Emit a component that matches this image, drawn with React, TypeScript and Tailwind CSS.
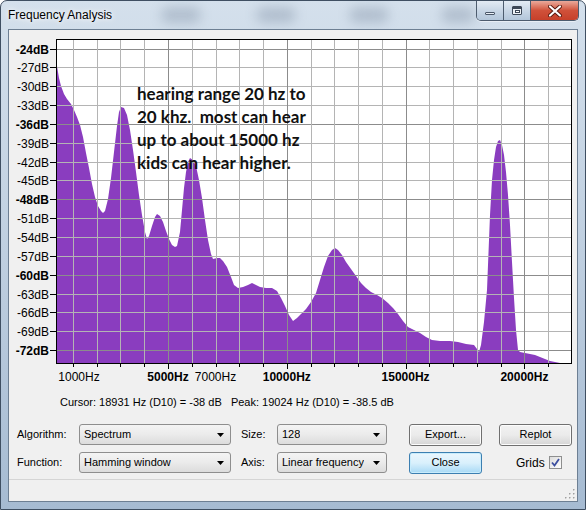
import React from "react";

const Y0 = 48.5;
const DY = 18.85;
const dbLabels = Array.from({ length: 17 }, (_, k) => -24 - k * 3);
const vLines = Array.from({ length: 21 }, (_, i) => i + 1);
const vx = (n: number) => Math.round(49.2 + 23.76 * n) + 0.5;
const hy = (k: number) => Math.round(Y0 + k * DY) + 0.5;

const xLabels = [
  { t: "1000Hz", x: 79, b: false },
  { t: "5000Hz", x: 168, b: true },
  { t: "7000Hz", x: 215.5, b: false },
  { t: "10000Hz", x: 286.8, b: true },
  { t: "15000Hz", x: 405.6, b: true },
  { t: "20000Hz", x: 524.4, b: true },
];

// spectrum outline, page coordinates
const curve = [
  [57, 66], [59, 78], [61, 86], [64, 94], [67, 99], [71, 104], [74, 110], [77, 117], [80, 125], [83, 137],
  [86, 153], [89, 168], [92, 184], [95, 197], [98, 206], [101, 211], [103, 213], [105, 211], [108, 199],
  [111, 178], [114, 152], [117, 126], [119, 112], [121, 107], [124, 108], [127, 115], [130, 130], [133, 150],
  [136, 172], [139, 195], [142, 215], [145, 232], [147, 239], [149, 236], [152, 226], [155, 217], [157, 214],
  [160, 216], [163, 222], [166, 231], [169, 239], [172, 245], [175, 247], [177, 246], [180, 232], [182, 210],
  [184, 188], [186, 172], [188, 162], [190, 158], [193, 160], [196, 166], [199, 180], [202, 198], [205, 220],
  [208, 240], [211, 254], [213, 259], [217, 258], [220, 258], [223, 261], [227, 267], [231, 277], [234, 285],
  [238, 288], [243, 287], [248, 285], [252, 283], [256, 285], [260, 287], [266, 288], [272, 288], [277, 291],
  [281, 298], [285, 306], [289, 315], [293, 321], [297, 318], [301, 314], [306, 309], [311, 302], [316, 293],
  [320, 280], [324, 267], [328, 256], [332, 250], [335, 248], [338, 250], [342, 255], [346, 262], [351, 269],
  [356, 276], [361, 283], [366, 288], [371, 292], [377, 295], [382, 298], [388, 303], [393, 308], [398, 314],
  [403, 321], [408, 327], [414, 330], [420, 333], [426, 337], [432, 340], [440, 341], [450, 341], [458, 342],
  [466, 344], [474, 345], [477, 349], [479, 352], [481, 345], [484, 322], [487, 290], [490, 215], [492, 180],
  [494, 160], [496, 147], [498, 141], [500, 140], [502, 145], [504, 155], [506, 172], [508, 195], [510, 225],
  [512, 262], [514, 298], [516, 330], [518, 350], [520, 352], [525, 353], [530, 354], [535, 355], [540, 357],
  [545, 359], [550, 361], [555, 362], [560, 363], [565, 364],
];
const fillPoints = "57,364 " + curve.map(p => p.join(",")).join(" ");

const note = [
  "hearing range 20 hz to",
  "20 khz.  most can hear",
  "up to about 15000 hz",
  "kids can hear higher.",
];

function Chart() {
  return (
    <svg width={568} height={360} viewBox="9 30 568 360" className="block shrink-0">
      <rect x={56.5} y={39.5} width={515} height={324} fill="#ffffff" />
      <polygon points={fillPoints} fill="#8a3dbf" />
      {dbLabels.map((_, k) => (
        <line key={"h" + k} x1={57} x2={571} y1={hy(k)} y2={hy(k)} stroke={k % 4 === 0 ? "#8c8c8c" : "#b4b4b4"} shapeRendering="crispEdges" />
      ))}
      {vLines.map(n => (
        <line key={"v" + n} x1={vx(n)} x2={vx(n)} y1={40} y2={363} stroke={n % 5 === 0 ? "#8c8c8c" : "#b4b4b4"} shapeRendering="crispEdges" />
      ))}
      <rect x={56.5} y={39.5} width={515} height={324} fill="none" stroke="#000000" shapeRendering="crispEdges" />
      {dbLabels.map((db, k) => (
        <g key={"l" + k}>
          <line x1={50} x2={56} y1={hy(k)} y2={hy(k)} stroke="#000000" shapeRendering="crispEdges" />
          <text x={49} y={hy(k) + 4.5} textAnchor="end" fontSize={12} fontWeight={k % 4 === 0 ? 700 : 400} fontFamily="'Liberation Sans', Arial, sans-serif" fill="#000000">
            {db}dB
          </text>
        </g>
      ))}
      {vLines.map(n => (
        <line key={"t" + n} x1={vx(n)} x2={vx(n)} y1={364} y2={n % 5 === 0 ? 369 : 367} stroke="#000000" shapeRendering="crispEdges" />
      ))}
      {xLabels.map(l => (
        <text key={l.t} x={l.x} y={381} textAnchor="middle" fontSize={12} fontWeight={l.b ? 700 : 400} fontFamily="'Liberation Sans', Arial, sans-serif" fill="#000000">
          {l.t}
        </text>
      ))}
      {note.map((line, i) => (
        <text key={i} x={137} y={100 + i * 23} fontSize={17} fontWeight={700} fontFamily="Lato, 'Open Sans', sans-serif" fill="#111111" xmlSpace="preserve">
          {line}
        </text>
      ))}
    </svg>
  );
}

function Combo({ value, width }: { value: string; width: string }) {
  return (
    <div className={"flex h-[21px] items-center justify-between rounded-[3px] border border-[#8e8e8e] bg-gradient-to-b from-[#f4f4f4] via-[#ebebeb] to-[#dcdcdc] pl-[4px] pr-[6px] " + width}>
      <span className="truncate">{value}</span>
      <svg width="7" height="4" viewBox="0 0 7 4" className="shrink-0">
        <path d="M0 0 H7 L3.5 4 Z" fill="#000000" />
      </svg>
    </div>
  );
}

function Button({ label, focused }: { label: string; focused?: boolean }) {
  return (
    <div
      className={
        focused
          ? "flex h-[22px] w-[73px] items-center justify-center rounded-[3px] border border-[#3c7fb1] bg-gradient-to-b from-[#eaf6fd] via-[#d9f0fc] to-[#a7d9f5] shadow-[inset_0_0_0_1px_#c8ecfc]"
          : "flex h-[22px] w-[73px] items-center justify-center rounded-[3px] border border-[#707070] bg-gradient-to-b from-[#f2f2f2] via-[#ebebeb] to-[#d5d5d5] shadow-[inset_0_0_0_1px_#fcfcfc]"
      }
    >
      {label}
    </div>
  );
}

function TitleButtons() {
  return (
    <div className="flex h-[20px] self-start overflow-hidden rounded-b-[5px] border border-t-0 border-[#4d5c6e] shadow-[0_1px_0_#e8eef5]">
      <div className="flex w-[27px] items-center justify-center border-r border-[#4d5c6e] bg-gradient-to-b from-[#e3ebf4] via-[#c9d7e6] to-[#b3c6da]">
        <div className="mt-[6px] h-[3px] w-[10px] rounded-[1px] border border-[#4a5768] bg-[#e8eef5]" />
      </div>
      <div className="flex w-[27px] items-center justify-center border-r border-[#4d5c6e] bg-gradient-to-b from-[#e3ebf4] via-[#c9d7e6] to-[#b3c6da]">
        <div className="h-[9px] w-[10px] rounded-[1px] border border-[#3d4857] bg-[#eef2f7] shadow-[inset_0_2px_0_#3d4857]">
          <div className="mx-auto mt-[3px] h-[3px] w-[5px] border border-[#3d4857] bg-white" />
        </div>
      </div>
      <div className="flex w-[47px] items-center justify-center bg-gradient-to-b from-[#e9a99b] via-[#d0513a] to-[#c6402a]">
        <svg width="14" height="12" viewBox="0 0 14 12">
          <path d="M2 1.5 L12 10.5 M12 1.5 L2 10.5" stroke="#5a1a10" strokeWidth="4" strokeLinecap="round" />
          <path d="M2 1.5 L12 10.5 M12 1.5 L2 10.5" stroke="#ffffff" strokeWidth="2.2" strokeLinecap="round" />
        </svg>
      </div>
    </div>
  );
}

export default function App() {
  return (
    <div className="relative flex h-[510px] w-[586px] flex-col overflow-hidden rounded-t-[7px] border border-[#3f4f62] bg-gradient-to-b from-[#d4e0ec] via-[#bfcfe0] to-[#a6bbd2] font-['Liberation_Sans',Arial,sans-serif] text-[11px] text-black">
      <div className="pointer-events-none absolute left-[160px] top-[6px] h-[16px] w-[40px] rounded-full bg-[#7f8fa3] opacity-40 blur-[6px]" />
      <div className="pointer-events-none absolute left-[255px] top-[6px] h-[16px] w-[40px] rounded-full bg-[#7f8fa3] opacity-40 blur-[6px]" />
      <div className="pointer-events-none absolute left-[348px] top-[6px] h-[16px] w-[40px] rounded-full bg-[#7f8fa3] opacity-40 blur-[6px]" />
      <div className="pointer-events-none absolute left-[440px] top-[6px] h-[16px] w-[34px] rounded-full bg-[#7f8fa3] opacity-40 blur-[6px]" />

      <div className="relative flex h-[28px] shrink-0 items-center pl-[7px] pr-[6px]">
        <span className="text-[12px] text-[#000000] [text-shadow:0_0_8px_#ffffff,0_0_4px_#ffffff]">Frequency Analysis</span>
        <div className="ml-auto flex h-full">
          <TitleButtons />
        </div>
      </div>

      <div className="relative mx-[7px] mb-[7px] flex flex-1 flex-col border border-[#6d7f93] bg-[#f0f0f0]">
        <Chart />

        <div className="flex h-[24px] shrink-0 items-center pl-[51px] text-[11px] whitespace-pre">
          {"Cursor: 18931 Hz (D10) = -38 dB   Peak: 19024 Hz (D10) = -38.5 dB"}
        </div>

        <div className="mt-[10px] grid grid-cols-[62px_152px_36px_120px_95px_90px] grid-rows-[21px_21px] items-center gap-y-[7px] pl-[8px]">
          <span>Algorithm:</span>
          <Combo value="Spectrum" width="w-[152px]" />
          <span className="pl-[10px]">Size:</span>
          <div className="pl-[10px]"><Combo value="128" width="w-[110px]" /></div>
          <div className="pl-[22px]"><Button label="Export..." /></div>
          <div className="pl-[17px]"><Button label="Replot" /></div>

          <span>Function:</span>
          <Combo value="Hamming window" width="w-[152px]" />
          <span className="pl-[10px]">Axis:</span>
          <div className="pl-[10px]"><Combo value="Linear frequency" width="w-[110px]" /></div>
          <div className="pl-[22px]"><Button label="Close" focused /></div>
          <div className="flex items-center gap-[4px] pl-[34px]">
            <span className="text-[12px]">Grids</span>
            <div className="flex h-[13px] w-[13px] items-center justify-center border border-[#8e8f8f] bg-gradient-to-br from-[#dcdcdc] to-[#ffffff]">
              <svg width="9" height="9" viewBox="0 0 9 9">
                <path d="M1 4.5 L3.5 7.5 L8 1" stroke="#3c4fa0" strokeWidth="1.8" fill="none" />
              </svg>
            </div>
          </div>
        </div>

        <div className="mt-[6px] flex flex-1 items-end justify-end border-t border-[#d5d5d5] bg-[#f0f0f0] p-[2px]">
          <svg width="11" height="11" viewBox="0 0 11 11">
            {[[9, 1], [9, 5], [5, 5], [9, 9], [5, 9], [1, 9]].map(([x, y]) => (
              <g key={x + "-" + y}>
                <rect x={x} y={y} width="1.5" height="1.5" fill="#ffffff" transform="translate(0.8 0.8)" />
                <rect x={x} y={y} width="1.5" height="1.5" fill="#a0a0a0" />
              </g>
            ))}
          </svg>
        </div>
      </div>
    </div>
  );
}
